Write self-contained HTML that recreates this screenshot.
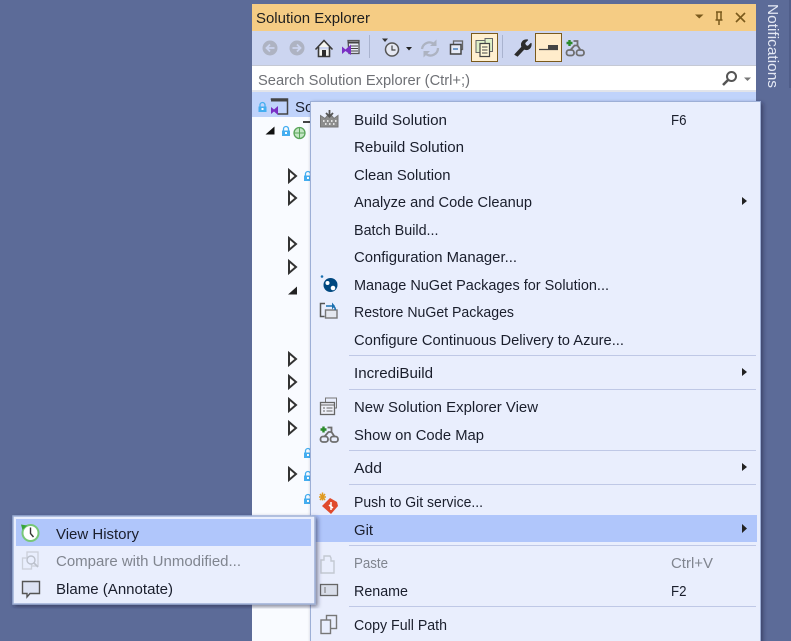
<!DOCTYPE html>
<html><head><meta charset="utf-8"><style>
html,body{margin:0;padding:0;background:#5c6b98;width:791px;height:641px;overflow:hidden}
svg{display:block}
text{font-family:"Liberation Sans",sans-serif;font-size:15px;fill:#1a1e2c}
.d{fill:#80858f}
.s{fill:#6e7075}
.t{fill:#1f1f1f}
</style></head><body>
<svg width="791" height="641" viewBox="0 0 791 641" xmlns="http://www.w3.org/2000/svg">
<defs>
<filter id="s" x="-5%" y="-5%" width="110%" height="110%"><feDropShadow dx="2" dy="2" stdDeviation="2" flood-color="#1c2440" flood-opacity=".55"/></filter>
<g id="lock"><path d="M1.500 5V3a2.500 2.500 0 0 1 5 0v2" fill="none" stroke="#45aef0" stroke-width="1.300"/><rect x="0" y="4.500" width="8" height="5.500" fill="#45aef0"/><rect x="3" y="6" width="2" height="2" fill="#fff"/></g>
<path id="tri" d="M0 0L7 6L0 12Z" fill="#fff" stroke="#333" stroke-width="2"/>
<g id="map" fill="none" stroke="#6e6e6e" stroke-width="1.800"><rect x="1" y="11.500" width="7.500" height="5.500" rx="2.500"/><rect x="11" y="11.500" width="7.500" height="5.500" rx="2.500"/><path d="M5 11.500L9 7h3V2.500H8M12 7l3 4.500"/><path d="M1 4.500h6M4 1.500v6" stroke="#2b8a2b" stroke-width="2.400"/></g>
</defs>
<rect width="791" height="641" fill="#5c6b98"/>
<rect x="789" y="0" width="2" height="88" fill="#505e8a"/>
<!-- panel -->
<rect x="252" y="4" width="504" height="637" fill="#f9fbff"/>
<rect x="252" y="4" width="504" height="27" fill="#f5cc84"/>
<text class="t" x="256" y="23" textLength="114" lengthAdjust="spacingAndGlyphs">Solution Explorer</text>
<path d="M695 14.500h8.500l-4.250 4z" fill="#7a5a1c"/>
<path d="M716 12h6M717 12v8h4v-8M715.500 20h7M719 20v5" fill="none" stroke="#7a5a1c" stroke-width="1.500"/>
<path d="M736 13l9 9M745 13l-9 9" fill="none" stroke="#7a5a1c" stroke-width="1.600"/>
<!-- toolbar -->
<rect x="252" y="31" width="504" height="34" fill="#ccd5f0"/>
<circle cx="270" cy="48" r="7.500" fill="#aeb3c2"/><path d="M274.500 48h-7M270 44.500L266.500 48l3.500 3.500" fill="none" stroke="#ccd5f0" stroke-width="1.800"/>
<circle cx="297" cy="48" r="7.500" fill="#aeb3c2"/><path d="M292.500 48h7M297 44.500l3.500 3.500-3.500 3.500" fill="none" stroke="#ccd5f0" stroke-width="1.800"/>
<path d="M315.500 49.500L324 40.500l8.500 9M318.500 47v9.500h11V47" fill="#f5f5f0" stroke="#3a3a3a" stroke-width="1.600"/><rect x="322" y="50" width="4" height="6.500" fill="#2e2e2e"/>
<path d="M348 40.500h11v13H349z" fill="#e8ecf6" stroke="#555" stroke-width="1.300"/><path d="M348 42.500h11" stroke="#444" stroke-width="2"/><path d="M351 46h7M351 48.500h7M351 51h7" stroke="#444"/>
<path d="M342 46.500l3.500 3 5.500-5v10.500l-5.500-4-3.500 3z" fill="#7a2fc4"/>
<path d="M369.500 35v23" stroke="#a9b3cf" stroke-width="1"/>
<path d="M382 38.500h6l-3 3.500z" fill="#333"/>
<circle cx="392" cy="49.500" r="6.500" fill="#e6e9f3" stroke="#555" stroke-width="1.500"/><path d="M392 45.500v4.500h3.500" fill="none" stroke="#444" stroke-width="1.200"/>
<path d="M406 47h6l-3 3.500z" fill="#222"/>
<path d="M422 49a7.500 7.500 0 0 1 12-5M438 48a7.500 7.500 0 0 1-12 6" fill="none" stroke="#adb3c1" stroke-width="2.300"/><path d="M436.500 39.500v6.500h-6.500zM423.500 57.500v-6.500h6.500z" fill="#adb3c1"/>
<rect x="453.500" y="41" width="9" height="8.500" fill="none" stroke="#666" stroke-width="1.300"/><rect x="450.500" y="44.500" width="10.500" height="9.500" fill="#e6eaf6" stroke="#444" stroke-width="1.500"/><path d="M453 49h5" stroke="#3d78b8" stroke-width="1.400"/>
<rect x="471.500" y="33.500" width="26" height="28" fill="#fff0d0" stroke="#7a5a1c" stroke-width="1"/>
<path d="M476 40.500h9v12h-9z" fill="#dff0c8" stroke="#666"/><path d="M485 38.500h7.500v13h-7z" fill="#dff0c8" stroke="#666"/>
<path d="M480 43.500h9.500v13H480z" fill="#fff8d8" stroke="#444" stroke-width="1.200"/><path d="M482 47h5.500M482 50h5.500M482 53h5.500" stroke="#444"/>
<path d="M502.500 35v23" stroke="#a9b3cf" stroke-width="1"/>
<path d="M515 54.500l7-7.500c-1.500-4 1-7.500 5.500-7l-3 3 1 2.500 2.500 1 3-3c.5 4.500-3 7-7 5.500l-6.500 7z" fill="#2c2c2c" stroke="#2c2c2c" stroke-width="1.200" stroke-linejoin="round"/>
<rect x="535.500" y="33.500" width="26" height="28" fill="#ffeccb" stroke="#7a5a1c" stroke-width="1"/>
<path d="M539 49.500h19" stroke="#444" stroke-width="1.300"/><rect x="548" y="45" width="10" height="4.500" fill="#444"/>
<use href="#map" x="565.500" y="38.500"/>
<!-- search -->
<rect x="252" y="65" width="504" height="27" fill="#fff"/>
<path d="M252 65.500h504M252 91h504" stroke="#c5c9d4" stroke-width="1"/>
<text class="s" x="258" y="85" textLength="212" lengthAdjust="spacingAndGlyphs">Search Solution Explorer (Ctrl+;)</text>
<circle cx="731.500" cy="76.500" r="4.500" fill="none" stroke="#555" stroke-width="2"/><path d="M728 80l-5 5" stroke="#555" stroke-width="2.600"/>
<path d="M744 77.500h7l-3.500 3.500z" fill="#777"/>
<!-- tree -->
<rect x="252" y="92" width="504" height="25" fill="#c0d3fb"/>
<use href="#lock" x="258.500" y="102"/>
<path d="M271.500 100v-1h16v15h-10" fill="none" stroke="#444" stroke-width="1.500"/><path d="M271 99h17v2.500h-17z" fill="#444"/>
<path d="M271 107l3 2.500 4-3.500v9l-4-3.500-3 2.500z" fill="#7a2fc4"/>
<text x="295" y="112">So</text>
<path d="M265.500 134.500l9-8v8z" fill="#111"/>
<use href="#lock" x="282" y="126"/>
<path d="M303 122h8" stroke="#444" stroke-width="2"/>
<circle cx="299.500" cy="133" r="5.500" fill="#c4e6c4" stroke="#5aa55a" stroke-width="1.300"/><path d="M294 133h11M299.500 127.500v11" stroke="#5aa55a"/>
<use href="#tri" x="289" y="170"/><use href="#lock" x="304" y="171"/>
<use href="#tri" x="289" y="192"/>
<use href="#tri" x="289" y="238"/>
<use href="#tri" x="289" y="261"/>
<path d="M288 294.500l9-8v8z" fill="#222"/>
<use href="#tri" x="289" y="353"/>
<use href="#tri" x="289" y="376"/>
<use href="#tri" x="289" y="399"/>
<use href="#tri" x="289" y="422"/>
<use href="#lock" x="304" y="448"/>
<use href="#tri" x="289" y="468"/><use href="#lock" x="304" y="471"/>
<use href="#lock" x="304" y="494"/>
<!-- notifications -->
<text transform="translate(768,4) rotate(90)" textLength="84" lengthAdjust="spacingAndGlyphs" style="fill:#e4e8f4;font-size:14.500px">Notifications</text>
<!-- menu -->
<g filter="url(#s)"><rect x="310.500" y="101.500" width="450" height="545" fill="#e9eefd" stroke="#9dafd6" stroke-width="1"/></g>
<path d="M349 355.500h407M349 389.500h407M349 450.500h407M349 484.500h407M349 545.500h407M349 606.500h407" stroke="#bfc8e6" stroke-width="1"/>
<rect x="312" y="515" width="445" height="27" fill="#b0c6fb"/>
<!-- menu icons -->
<path d="M320.500 115.500v11.500h17.500V115.500l-4 3-2.500-3-2 2-2-2-2.500 3z" fill="#8d8d8d" stroke="#777"/><path d="M329.500 110v6M326 113l3.500 3.500 3.500-3.500" fill="none" stroke="#555" stroke-width="1.800"/><path d="M323 121h1.500M327 121h1.500M331 121h1.500M335 121h1.500M325 124h1.500M329 124h1.500M333 124h1.500" stroke="#fff" stroke-width="1.500"/>
<circle cx="330.500" cy="285" r="7" fill="#004880"/><circle cx="327.500" cy="283" r="2" fill="#fff"/><circle cx="333" cy="288" r="2.300" fill="#fff"/><circle cx="322" cy="276.500" r="1.300" fill="#1a70b0"/>
<path d="M325 303.500h-4.500v13h4" fill="none" stroke="#555" stroke-width="1.500"/><rect x="325.500" y="310" width="11.500" height="8" fill="#e4e7ef" stroke="#777" stroke-width="1.400"/><path d="M326 306h6a3 3 0 0 1 3 4" fill="none" stroke="#1a70b0" stroke-width="1.500"/><path d="M332 302.500v7l3-3.500z" fill="#1a70b0"/>
<rect x="325.500" y="398" width="11" height="10" fill="none" stroke="#777"/><rect x="320.500" y="402.500" width="14" height="12" fill="#eef0f8" stroke="#666" stroke-width="1.300"/><path d="M320.500 405h14M323 408h2M326.500 408h6M323 411h2M326.500 411h6" stroke="#666"/>
<use href="#map" x="319.500" y="425"/>
<path d="M330 498l7 4 1 4-7 8-9-8z" fill="#e04a2c"/><path d="M331 502v8M329 505l4 3" stroke="#fff" stroke-width="1.500"/><path d="M320 494l5 6M325 494l-5 6M319 497h7M322.500 492.500v8" stroke="#e09a20" stroke-width="1.500"/>
<path d="M324 556h6l1 2v3h3v12h-13v-13h3z" fill="none" stroke="#c3c8d2" stroke-width="1.400"/>
<rect x="320.500" y="584.500" width="17" height="11" fill="#d9deea" stroke="#666" stroke-width="1.300"/><path d="M325 587v6" stroke="#777"/>
<rect x="326.500" y="615.500" width="10" height="13" fill="none" stroke="#777" stroke-width="1.400"/><rect x="321" y="620" width="9.500" height="13.500" fill="#e9eefd" stroke="#777" stroke-width="1.400"/>
<!-- menu text -->
<text x="354" y="125" textLength="93" lengthAdjust="spacingAndGlyphs">Build Solution</text>
<text x="354" y="152" textLength="110" lengthAdjust="spacingAndGlyphs">Rebuild Solution</text>
<text x="354" y="180" textLength="96.500" lengthAdjust="spacingAndGlyphs">Clean Solution</text>
<text x="354" y="207" textLength="178" lengthAdjust="spacingAndGlyphs">Analyze and Code Cleanup</text>
<text x="354" y="235" textLength="84.500" lengthAdjust="spacingAndGlyphs">Batch Build...</text>
<text x="354" y="262" textLength="163" lengthAdjust="spacingAndGlyphs">Configuration Manager...</text>
<text x="354" y="290" textLength="255" lengthAdjust="spacingAndGlyphs">Manage NuGet Packages for Solution...</text>
<text x="354" y="317" textLength="160" lengthAdjust="spacingAndGlyphs">Restore NuGet Packages</text>
<text x="354" y="345" textLength="270" lengthAdjust="spacingAndGlyphs">Configure Continuous Delivery to Azure...</text>
<text x="354" y="378" textLength="79" lengthAdjust="spacingAndGlyphs">IncrediBuild</text>
<text x="354" y="412" textLength="184" lengthAdjust="spacingAndGlyphs">New Solution Explorer View</text>
<text x="354" y="440" textLength="130" lengthAdjust="spacingAndGlyphs">Show on Code Map</text>
<text x="354" y="473" textLength="28" lengthAdjust="spacingAndGlyphs">Add</text>
<text x="354" y="507" textLength="129" lengthAdjust="spacingAndGlyphs">Push to Git service...</text>
<text x="354" y="535" textLength="19" lengthAdjust="spacingAndGlyphs">Git</text>
<text x="354" y="568" class="d" textLength="34" lengthAdjust="spacingAndGlyphs">Paste</text>
<text x="354" y="596" textLength="54" lengthAdjust="spacingAndGlyphs">Rename</text>
<text x="354" y="630" textLength="93" lengthAdjust="spacingAndGlyphs">Copy Full Path</text>
<text x="671" y="125" textLength="15.500" lengthAdjust="spacingAndGlyphs">F6</text>
<text x="671" y="568" class="d" textLength="42" lengthAdjust="spacingAndGlyphs">Ctrl+V</text>
<text x="671" y="596" textLength="15.500" lengthAdjust="spacingAndGlyphs">F2</text>
<path d="M742 197l5 4-5 4zM742 368l5 4-5 4zM742 463l5 4-5 4zM742 524l5 4.500-5 4.500z" fill="#222"/>
<!-- submenu -->
<g filter="url(#s)"><rect x="13" y="516" width="302" height="88" fill="#e9eefd" stroke="#9dafd6" stroke-width="1.500"/></g>
<rect x="16" y="519" width="295" height="27" fill="#b0c6fb"/>
<circle cx="30.500" cy="533" r="8" fill="#fff" stroke="#78c878" stroke-width="2"/><path d="M30.500 527.500v6l3 3.500" fill="none" stroke="#333" stroke-width="1.400"/><path d="M21 524.500l6 1-4.500 4.500z" fill="#3aa53a"/>
<rect x="27" y="552" width="11" height="14" fill="none" stroke="#ccd0da" stroke-width="1.300"/><rect x="22.500" y="558" width="9" height="11" fill="#e9eefd" stroke="#ccd0da" stroke-width="1.300"/><circle cx="31" cy="560" r="4" fill="#e9eefd" stroke="#bcc1cc" stroke-width="1.400"/><path d="M34 563l4 4" stroke="#bcc1cc" stroke-width="1.600"/>
<path d="M22.500 581.500h17v12h-9.500l-3 3.500v-3.500h-4.500z" fill="#dde3f4" stroke="#555" stroke-width="1.400"/>
<text x="56" y="539" textLength="83" lengthAdjust="spacingAndGlyphs">View History</text>
<text x="56" y="566" class="d" textLength="185" lengthAdjust="spacingAndGlyphs">Compare with Unmodified...</text>
<text x="56" y="594" textLength="117" lengthAdjust="spacingAndGlyphs">Blame (Annotate)</text>
</svg>
</body></html>
